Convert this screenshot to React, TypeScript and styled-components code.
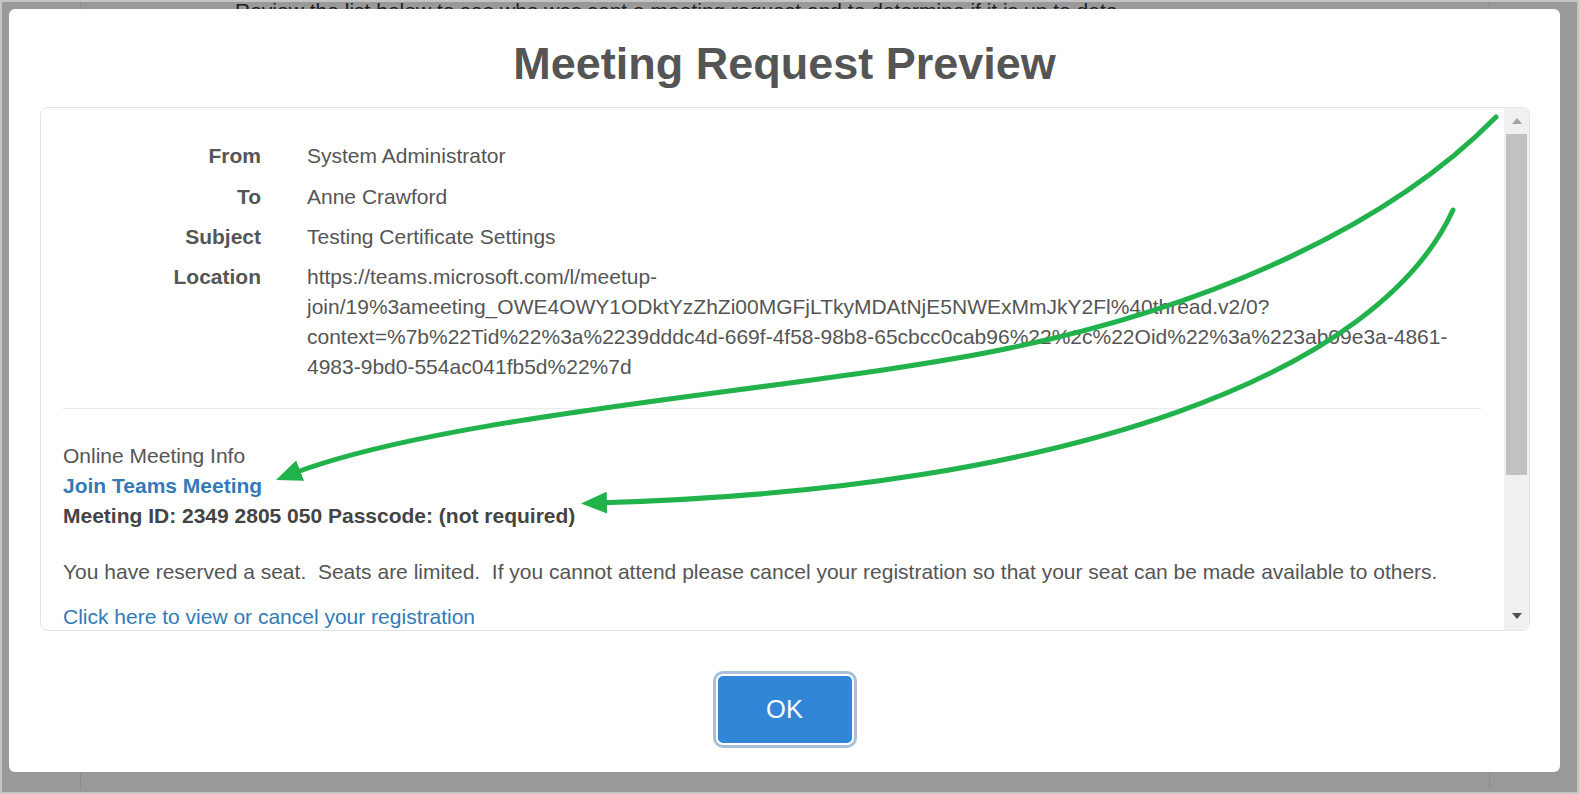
import React from 'react';
import styled, { createGlobalStyle } from 'styled-components';

const GlobalStyle = createGlobalStyle`
  html, body {
    margin: 0;
    padding: 0;
  }
  body {
    font-family: "Liberation Sans", Arial, sans-serif;
  }
`;

const TEXT = '#555555';
const LINK = '#337ab7';
const GREEN = '#22b24c';

const Frame = styled.div`
  position: relative;
  width: 1579px;
  height: 794px;
  box-sizing: border-box;
  border: 2px solid #c4c4c4;
  background: #999999;
  overflow: hidden;
`;

// the page behind the dialog, dimmed by the backdrop
const BackPage = styled.div`
  margin-left: 78px;
  width: 1410px;
  height: 100%;
  box-sizing: border-box;
  border-left: 1px solid #8c8c8c;
  border-right: 1px solid #8c8c8c;
`;

const BackText = styled.p`
  margin: -3px 0 0;
  padding-left: 154px;
  font-size: 21px;
  line-height: 24px;
  color: #202020;
  white-space: nowrap;
`;

const Modal = styled.div`
  position: absolute;
  top: 7px;
  left: 7px;
  width: 1551px;
  height: 763px;
  background: #ffffff;
  border-radius: 6px;
  display: flex;
  flex-direction: column;
  align-items: center;
`;

const Title = styled.h1`
  margin: 28px 0 0;
  font-size: 45px;
  line-height: 54px;
  font-weight: bold;
  color: ${TEXT};
`;

const PreviewBox = styled.div`
  align-self: stretch;
  margin: 16px 30px 0 31px;
  height: 524px;
  box-sizing: border-box;
  border: 1px solid #e3e3e3;
  border-radius: 8px;
  overflow: hidden;
  display: flex;
`;

const PreviewBody = styled.div`
  flex: 1;
  overflow: hidden;
  padding: 28px 23px 0 22px;
  font-size: 21px;
  line-height: 30px;
  color: ${TEXT};
`;

const HeaderRow = styled.div`
  display: grid;
  grid-template-columns: 198px 1fr;
  column-gap: 46px;
  padding: 5.2px 0;
`;

const HeaderLabel = styled.div`
  text-align: right;
  font-weight: bold;
`;

const HeaderValue = styled.div``;

const UrlLine = styled.span`
  display: block;
`;

const Divider = styled.hr`
  margin: 20px 0 32px;
  border: 0;
  border-top: 1px solid #ebebeb;
`;

const InfoLine = styled.div<{ $bold?: boolean; $link?: boolean }>`
  font-weight: ${(p) => (p.$bold ? 'bold' : 'normal')};
  color: ${(p) => (p.$link ? LINK : p.$bold ? '#444444' : TEXT)};
`;

const Notice = styled.p`
  margin: 26px 0 0;
  white-space: nowrap;
`;

const RegLink = styled.a`
  display: block;
  margin-top: 15px;
  color: ${LINK};
  text-decoration: none;
`;

const ScrollTrack = styled.div`
  width: 25px;
  background: #f0f0f0;
  display: flex;
  flex-direction: column;
  align-items: center;
`;

const ScrollArrow = styled.div<{ $down?: boolean }>`
  height: 26px;
  flex: none;
  display: flex;
  align-items: center;
  justify-content: center;
  margin-top: ${(p) => (p.$down ? 'auto' : '0')};

  &::before {
    content: '';
    width: 0;
    height: 0;
    border-left: 5.5px solid transparent;
    border-right: 5.5px solid transparent;
    ${(p) =>
      p.$down
        ? 'border-top: 6px solid #505050; margin-bottom: 3px;'
        : 'border-bottom: 6px solid #a3a3a3;'}
  }
`;

const ScrollThumb = styled.div`
  width: 21px;
  height: 341px;
  background: #c1c1c1;
`;

const Footer = styled.div`
  margin-top: 45px;
`;

const OkButton = styled.button`
  width: 134px;
  height: 67px;
  border: 0;
  border-radius: 5px;
  background: #3186d7;
  color: #ffffff;
  font-family: "Liberation Sans", Arial, sans-serif;
  font-size: 25.5px;
  box-shadow: 0 0 0 2px #ffffff, 0 0 0 5px #a9c0d6;
  cursor: pointer;
`;

const Annotations = styled.svg`
  position: absolute;
  top: -2px;
  left: -2px;
  pointer-events: none;
`;

const headers = [
  { label: 'From', value: 'System Administrator' },
  { label: 'To', value: 'Anne Crawford' },
  { label: 'Subject', value: 'Testing Certificate Settings' },
];

const locationLines = [
  'https://teams.microsoft.com/l/meetup-',
  'join/19%3ameeting_OWE4OWY1ODktYzZhZi00MGFjLTkyMDAtNjE5NWExMmJkY2Fl%40thread.v2/0?',
  'context=%7b%22Tid%22%3a%2239dddc4d-669f-4f58-98b8-65cbcc0cab96%22%2c%22Oid%22%3a%223ab09e3a-4861-',
  '4983-9bd0-554ac041fb5d%22%7d',
];

const App = () => {
  return (
    <>
      <GlobalStyle />
      <Frame>
        <BackPage>
          <BackText>
            Review the list below to see who was sent a meeting request and to determine if it is up to date
          </BackText>
        </BackPage>

        <Modal>
          <Title>Meeting Request Preview</Title>
          <PreviewBox>
            <PreviewBody>
              {headers.map((h) => (
                <HeaderRow key={h.label}>
                  <HeaderLabel>{h.label}</HeaderLabel>
                  <HeaderValue>{h.value}</HeaderValue>
                </HeaderRow>
              ))}
              <HeaderRow>
                <HeaderLabel>Location</HeaderLabel>
                <HeaderValue>
                  {locationLines.map((line) => (
                    <UrlLine key={line}>{line}</UrlLine>
                  ))}
                </HeaderValue>
              </HeaderRow>

              <Divider />

              <InfoLine>Online Meeting Info</InfoLine>
              <InfoLine $bold $link>
                Join Teams Meeting
              </InfoLine>
              <InfoLine $bold>Meeting ID: 2349 2805 050 Passcode: (not required)</InfoLine>

              <Notice>
                You have reserved a seat.{'\u00a0'} Seats are limited.{'\u00a0'} If you cannot attend please cancel
                your registration so that your seat can be made available to others.
              </Notice>
              <RegLink href="#">Click here to view or cancel your registration</RegLink>
            </PreviewBody>
            <ScrollTrack>
              <ScrollArrow />
              <ScrollThumb />
              <ScrollArrow $down />
            </ScrollTrack>
          </PreviewBox>
          <Footer>
            <OkButton>OK</OkButton>
          </Footer>
        </Modal>

        {/* green call-out arrows drawn over the screenshot */}
        <Annotations width="1579" height="794" viewBox="0 0 1579 794">
          <defs>
            <marker
              id="head"
              markerUnits="userSpaceOnUse"
              markerWidth="26"
              markerHeight="22"
              viewBox="0 0 26 22"
              refX="12"
              refY="11"
              orient="auto"
            >
              <path d="M0 0 L26 11 L0 22 Z" fill={GREEN} />
            </marker>
          </defs>
          <path
            d="M1496 117 C1390 225 1215 305 1010 348 C810 390 450 412 289 475"
            fill="none"
            stroke={GREEN}
            strokeWidth="5"
            strokeLinecap="round"
            markerEnd="url(#head)"
          />
          <path
            d="M1453 210 C1380 370 1080 490 595 503"
            fill="none"
            stroke={GREEN}
            strokeWidth="5"
            strokeLinecap="round"
            markerEnd="url(#head)"
          />
        </Annotations>
      </Frame>
    </>
  );
};

export default App;
